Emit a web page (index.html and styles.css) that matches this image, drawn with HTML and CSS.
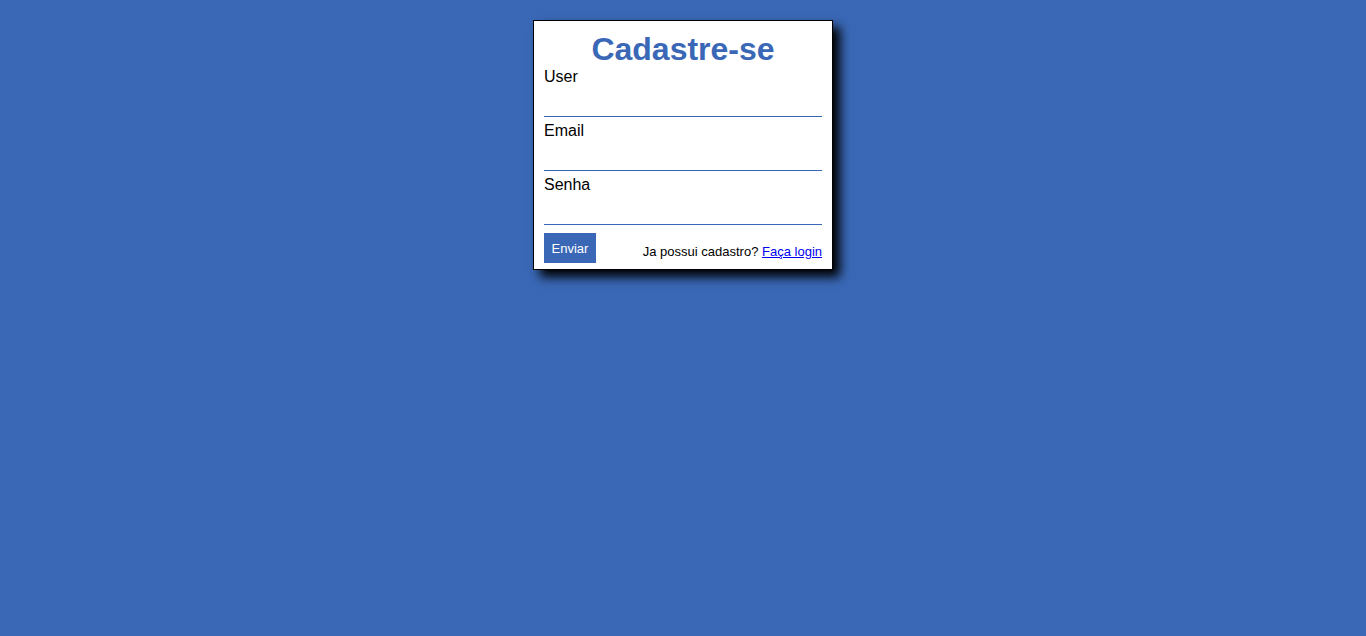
FILE: index.html
```html
<!DOCTYPE html>
<html>
<head>
<meta charset="utf-8">
<link rel="stylesheet" href="styles.css">
</head>
<body>
<form class="card">
  <h1 class="title">Cadastre-se</h1>
  <label class="label">User</label>
  <input class="field" type="text">
  <label class="label">Email</label>
  <input class="field" type="email">
  <label class="label">Senha</label>
  <input class="field" type="password">
  <div class="footer">
    <button class="btn" type="button">Enviar</button>
    <span class="note">Ja possui cadastro? <a href="#" class="link">Faça login</a></span>
  </div>
</form>
</body>
</html>
```
FILE: styles.css
```css
html, body {
  margin: 0;
  padding: 0;
}
body {
  background: #3a68b6;
  font-family: "Liberation Sans", Arial, sans-serif;
  min-height: 636px;
  display: flex;
  justify-content: center;
  align-items: flex-start;
}
.card {
  margin-top: 20px;
  width: 278px;
  background: #fff;
  border: 1px solid #000;
  padding: 10px 10px 6px;
  box-shadow: 7px 7px 10px #000;
  display: flex;
  flex-direction: column;
}
.title {
  margin: 0;
  font-size: 32px;
  line-height: 37px;
  color: #3a68b6;
  text-align: center;
  font-weight: bold;
}
.label {
  display: block;
  font-size: 16px;
  line-height: 18px;
  color: #000;
}
.field {
  display: block;
  box-sizing: border-box;
  width: 100%;
  height: 31px;
  margin: 0 0 5px;
  border: none;
  border-bottom: 1px solid #3a68b6;
  outline: none;
  padding: 0;
  background: transparent;
}
.footer {
  display: flex;
  justify-content: space-between;
  align-items: flex-end;
  margin-top: 3px;
}
.btn {
  background: #3a68b6;
  color: #fff;
  border: none;
  width: 52px;
  height: 30px;
  padding: 0;
  font-family: "Liberation Sans", Arial, sans-serif;
  font-size: 13px;
}
.note {
  font-size: 13px;
  line-height: 15px;
  color: #000;
  margin-bottom: 4px;
}
.link {
  color: #00e;
  text-decoration: underline;
}
```
